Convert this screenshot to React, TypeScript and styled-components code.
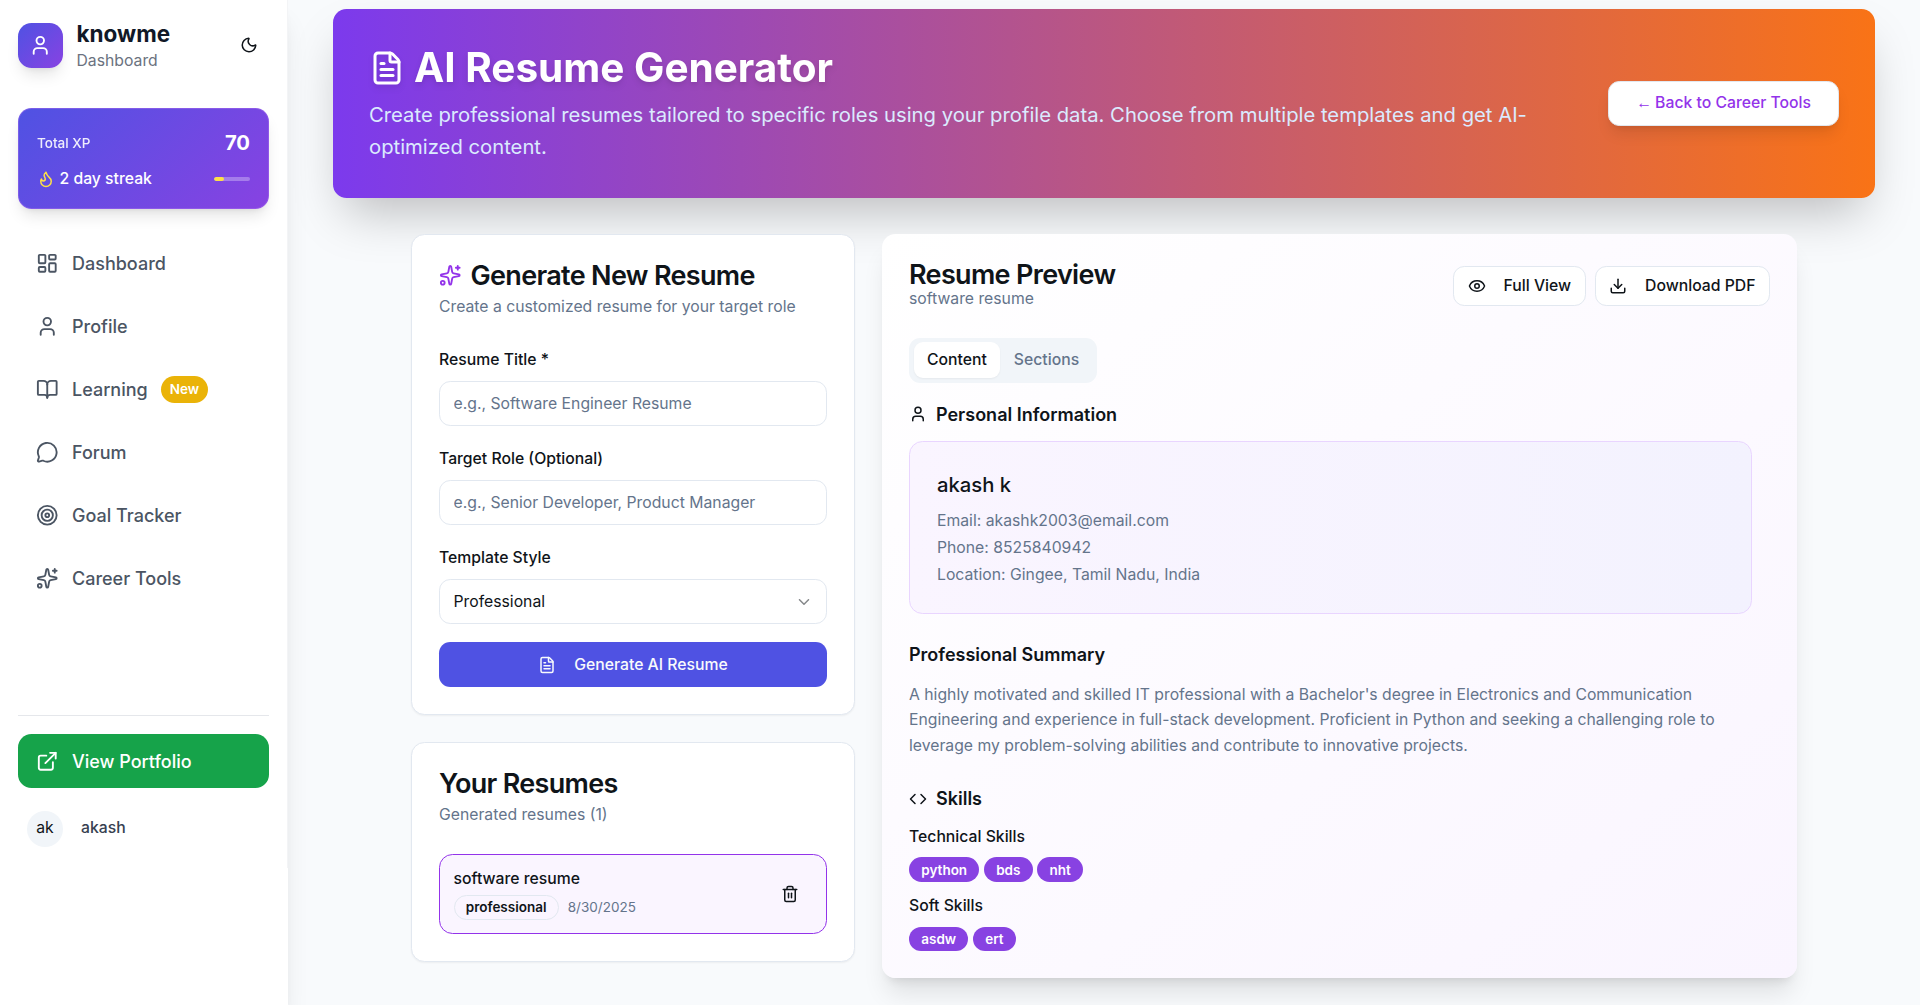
import React from "react";
import styled, { createGlobalStyle, css } from "styled-components";
import {
  BookOpen,
  ChevronDown,
  Code,
  Download,
  ExternalLink,
  Eye,
  FileText,
  Flame,
  LayoutDashboard,
  MessageCircle,
  Moon,
  Sparkles,
  Target,
  Trash2,
  User,
} from "lucide-react";

const color = {
  ink: "#0f1419",
  muted: "#64748b",
  border: "#e2e8f0",
  primary: "#4f52e3",
  accent: "#8842e2",
  purple: "#9333ea",
  lavender: "#faf5ff",
  page: "#f8fafc",
};

const GlobalStyle = createGlobalStyle`
  *, *::before, *::after { box-sizing: border-box; }
  html { font-size: 18px; }
  body {
    margin: 0;
    overflow: hidden;
    background: ${color.page};
    color: ${color.ink};
    font-family: Inter, "Liberation Sans", sans-serif;
    font-size: 1rem;
    line-height: 1.5;
  }
  h1, h2, h3, h4, p { margin: 0; }
  button, input { font: inherit; color: inherit; }
  svg { display: block; flex-shrink: 0; }
`;

const Shell = styled.div`
  display: flex;
  height: 1005px;
  overflow: hidden;
`;

/* Sidebar */

const Sidebar = styled.aside`
  position: relative;
  z-index: 2;
  width: 16rem;
  flex-shrink: 0;
  background: #fff;
  box-shadow: 0 20px 25px -5px rgba(0, 0, 0, 0.1), 0 8px 10px -6px rgba(0, 0, 0, 0.1);
`;

const SidebarInner = styled.div`
  display: flex;
  flex-direction: column;
  height: 868px;
  border-right: 1px solid #f3f4f6;
`;

const Brand = styled.div`
  display: flex;
  align-items: center;
  gap: 0.75rem;
  padding: 1rem;
`;

const BrandMark = styled.div`
  display: grid;
  place-items: center;
  width: 2.5rem;
  height: 2.5rem;
  border-radius: 0.75rem;
  color: #fff;
  background: linear-gradient(135deg, ${color.primary}, ${color.accent});
  box-shadow: 0 10px 15px -3px rgba(0, 0, 0, 0.1), 0 4px 6px -4px rgba(0, 0, 0, 0.1);
`;

const BrandText = styled.div`
  flex: 1;
`;

const BrandName = styled.div`
  font-size: 1.25rem;
  line-height: 1.75rem;
  font-weight: 700;
  color: #111827;
`;

const BrandSub = styled.div`
  font-size: 0.875rem;
  line-height: 1.25rem;
  color: #6b7280;
`;

const IconButton = styled.button`
  display: grid;
  place-items: center;
  width: 2.25rem;
  height: 2.25rem;
  padding: 0;
  border: 0;
  background: transparent;
`;

const XpCard = styled.div`
  display: flex;
  flex-direction: column;
  gap: 0.5rem;
  margin: 1rem 1rem 0;
  padding: 1rem;
  border: 1px solid rgba(168, 110, 240, 0.45);
  border-radius: 0.75rem;
  color: #fff;
  background: linear-gradient(135deg, ${color.primary}, ${color.accent}) border-box;
  box-shadow: 0 10px 15px -3px rgba(0, 0, 0, 0.1), 0 4px 6px -4px rgba(0, 0, 0, 0.1);
`;

const XpRow = styled.div`
  display: flex;
  align-items: center;
  justify-content: space-between;
`;

const XpLabel = styled.span`
  font-size: 0.75rem;
  line-height: 1rem;
  font-weight: 500;
  opacity: 0.9;
`;

const XpValue = styled.span`
  font-size: 1.125rem;
  line-height: 1.75rem;
  font-weight: 700;
`;

const Streak = styled.span`
  display: flex;
  align-items: center;
  gap: 0.25rem;
  font-size: 0.875rem;
  line-height: 1.25rem;
  font-weight: 500;
  svg { color: #fde047; }
`;

const Meter = styled.div`
  width: 2rem;
  height: 4px;
  overflow: hidden;
  border-radius: 999px;
  background: rgba(255, 255, 255, 0.3);
`;

const MeterFill = styled.div<{ $share: number }>`
  width: ${(p) => p.$share * 100}%;
  height: 100%;
  border-radius: 999px;
  background: #fde047;
`;

const Nav = styled.nav`
  display: flex;
  flex-direction: column;
  gap: 0.5rem;
  padding: 1.5rem 1rem 0;
`;

const navItem = css`
  display: flex;
  align-items: center;
  gap: 0.75rem;
  height: 54px;
  padding: 0.75rem 1rem;
  border-radius: 0.75rem;
  font-weight: 500;
`;

const NavItem = styled.div`
  ${navItem}
  color: #4b5563;
`;

const NewBadge = styled.span`
  padding: 0.25rem 8.5px;
  border-radius: 999px;
  background: #eab308;
  color: #fff;
  font-size: 0.75rem;
  line-height: 1rem;
  font-weight: 600;
`;

const SidebarFooter = styled.div`
  display: flex;
  flex-direction: column;
  gap: 1rem;
  margin: auto 1rem 17px;
  padding-top: 1rem;
  border-top: 1px solid #e5e7eb;
`;

const PortfolioButton = styled.div`
  ${navItem}
  background: #16a34a;
  color: #fff;
`;

const Account = styled.div`
  display: flex;
  align-items: center;
  gap: 1rem;
  height: 45px;
  padding: 0 0.5rem;
  font-size: 0.875rem;
  line-height: 1.25rem;
  font-weight: 500;
  color: #374151;
`;

const Avatar = styled.span`
  display: grid;
  place-items: center;
  width: 2rem;
  height: 2rem;
  border-radius: 50%;
  background: #f1f5f9;
  color: ${color.ink};
  font-weight: 400;
`;

/* Main column */

const Main = styled.main`
  flex: 1;
  padding: 9px 2.5rem 0;
`;

const Banner = styled.header`
  display: flex;
  align-items: center;
  justify-content: space-between;
  padding: 2rem;
  border-radius: 0.75rem;
  background: linear-gradient(to right, #7c3aed, #f97316);
  box-shadow: 0 25px 50px -12px rgba(0, 0, 0, 0.25);
`;

const BannerText = styled.div`
  width: 1190px;
`;

const BannerTitle = styled.h1`
  display: flex;
  align-items: center;
  gap: 0.5rem;
  margin-bottom: 0.5rem;
  color: #fff;
  font-size: 2.25rem;
  line-height: 2.5rem;
  font-weight: 700;
  filter: drop-shadow(0 4px 3px rgba(0, 0, 0, 0.07)) drop-shadow(0 2px 2px rgba(0, 0, 0, 0.06));
`;

const BannerCopy = styled.p`
  font-size: 1.125rem;
  line-height: 1.75rem;
  color: #dbeafe;
`;

const BackButton = styled.button`
  height: 2.5rem;
  padding: 0 1.5rem;
  border: 1px solid ${color.border};
  border-radius: 0.625rem;
  background: #fff;
  color: ${color.purple};
  font-size: 0.875rem;
  line-height: 1.25rem;
  font-weight: 500;
  white-space: nowrap;
  box-shadow: 0 10px 15px -3px rgba(0, 0, 0, 0.1), 0 4px 6px -4px rgba(0, 0, 0, 0.1);
`;

const Arrow = styled.span`
  margin-right: -1px;
  font-family: "Liberation Sans", sans-serif;
  font-weight: 400;
  line-height: 1;
`;

const Columns = styled.div`
  display: grid;
  grid-template-columns: 444px 915px;
  gap: 1.5rem;
  width: 1386px;
  margin: 2rem auto 0;
  align-items: start;
`;

const Stack = styled.div`
  display: flex;
  flex-direction: column;
  gap: 1.5rem;
`;

const Card = styled.section`
  padding: 1.5rem;
  border: 1px solid ${color.border};
  border-radius: 0.75rem;
  background: #fff;
  box-shadow: 0 1px 2px rgba(0, 0, 0, 0.05);
`;

const PreviewCard = styled(Card)`
  border: 0;
  background: linear-gradient(to bottom right, #fff, ${color.lavender});
  box-shadow: 0 20px 25px -5px rgba(0, 0, 0, 0.1), 0 8px 10px -6px rgba(0, 0, 0, 0.1);
`;

const CardHeader = styled.div`
  display: flex;
  flex-direction: column;
  gap: 0.375rem;
  margin-bottom: 1.5rem;
`;

const PreviewHeader = styled.div`
  display: flex;
  align-items: center;
  justify-content: space-between;
  margin-bottom: 1.5rem;
`;

const CardTitle = styled.h2`
  display: flex;
  align-items: center;
  gap: 0.5rem;
  font-size: 1.5rem;
  line-height: 1;
  font-weight: 600;
  letter-spacing: -0.025em;
  svg { color: ${color.purple}; }
`;

const Muted = styled.p`
  font-size: 0.875rem;
  line-height: 1.25rem;
  color: ${color.muted};
`;

const Form = styled.form`
  display: flex;
  flex-direction: column;
  gap: 1rem;
`;

const Field = styled.label`
  display: flex;
  flex-direction: column;
  gap: 0.5rem;
  font-size: 0.875rem;
  line-height: 1.5rem;
`;

const FieldName = styled.span`
  height: 1.5rem;
  padding-top: 1px;
  font-weight: 500;
`;

const TextInput = styled.input`
  width: 100%;
  height: 2.5rem;
  padding: 0 0.75rem;
  border: 1px solid ${color.border};
  border-radius: 0.625rem;
  background: #fff;
  font-size: 0.875rem;
  &::placeholder { color: ${color.muted}; opacity: 1; }
`;

const SelectBox = styled.div`
  display: flex;
  align-items: center;
  justify-content: space-between;
  height: 2.5rem;
  padding: 0 0.75rem;
  border: 1px solid ${color.border};
  border-radius: 0.625rem;
  svg { opacity: 0.5; }
`;

const SubmitButton = styled.button`
  display: flex;
  align-items: center;
  justify-content: center;
  gap: 1rem;
  height: 2.5rem;
  padding: 0;
  border: 0;
  border-radius: 0.625rem;
  background: ${color.primary};
  color: #f8fafc;
  font-size: 0.875rem;
  font-weight: 500;
`;

const ResumeItem = styled.div`
  display: flex;
  align-items: center;
  justify-content: space-between;
  padding: 0.75rem;
  border: 1px solid ${color.purple};
  border-radius: 0.75rem;
  background: ${color.lavender};
`;

const ResumeName = styled.div`
  margin-bottom: 0.25rem;
  font-size: 0.875rem;
  line-height: 1.25rem;
  font-weight: 500;
`;

const ResumeMeta = styled.div`
  display: flex;
  align-items: center;
  gap: 0.5rem;
  font-size: 0.75rem;
  line-height: 1rem;
  color: ${color.muted};
`;

const Badge = styled.span<{ $solid?: boolean }>`
  padding: 0.125rem 0.625rem;
  border: 1px solid ${(p) => (p.$solid ? "transparent" : color.border)};
  border-radius: 999px;
  background: ${(p) => (p.$solid ? color.accent : "transparent")};
  color: ${(p) => (p.$solid ? "#fff" : color.ink)};
  font-size: 0.75rem;
  line-height: 1rem;
  font-weight: 600;
`;

const DeleteButton = styled(IconButton)`
  width: 2.5rem;
`;

const Actions = styled.div`
  display: flex;
  gap: 0.5rem;
`;

const OutlineButton = styled.button`
  display: flex;
  align-items: center;
  gap: 1rem;
  height: 2.25rem;
  padding: 0 0.75rem;
  border: 1px solid ${color.border};
  border-radius: 0.625rem;
  background: #fff;
  font-size: 0.875rem;
  line-height: 1.25rem;
  font-weight: 500;
`;

const TabList = styled.div`
  display: inline-flex;
  align-items: center;
  height: 2.5rem;
  padding: 0.25rem;
  margin-bottom: 1rem;
  border-radius: 0.625rem;
  background: #f1f5f9;
  vertical-align: top;
`;

const Tab = styled.div<{ $active?: boolean }>`
  padding: 0.375rem 0.75rem;
  border-radius: 0.5rem;
  font-size: 0.875rem;
  line-height: 1.25rem;
  font-weight: 500;
  color: ${(p) => (p.$active ? color.ink : color.muted)};
  background: ${(p) => (p.$active ? "#fff" : "transparent")};
  box-shadow: ${(p) => (p.$active ? "0 1px 2px rgba(0, 0, 0, 0.05)" : "none")};
`;

const Sections = styled.div`
  display: flex;
  flex-direction: column;
  gap: 1.5rem;
  padding-right: 1rem;
`;

const SectionTitle = styled.h3`
  display: flex;
  align-items: center;
  gap: 0.5rem;
  margin-bottom: 0.75rem;
  font-size: 1rem;
  line-height: 1.5rem;
  font-weight: 600;
`;

const InfoPanel = styled.div`
  display: flex;
  flex-direction: column;
  gap: 0.25rem;
  padding: 1.5rem;
  border: 1px solid #e9d5ff;
  border-radius: 0.75rem;
  background: linear-gradient(to right, ${color.lavender}, #f3f2fe);
`;

const PersonName = styled.h4`
  margin-bottom: 0.25rem;
  font-size: 1.125rem;
  line-height: 1.75rem;
  font-weight: 500;
`;

const Summary = styled(Muted)`
  line-height: 1.625;
`;

const SkillGroups = styled.div`
  display: flex;
  flex-direction: column;
  gap: 0.75rem;
`;

const SkillLabel = styled.div`
  margin-bottom: 0.5rem;
  font-size: 0.875rem;
  line-height: 1.25rem;
  font-weight: 500;
`;

const Badges = styled.div`
  display: flex;
  gap: 0.25rem;
`;

const links = [
  { label: "Dashboard", Icon: LayoutDashboard },
  { label: "Profile", Icon: User },
  { label: "Learning", Icon: BookOpen, isNew: true },
  { label: "Forum", Icon: MessageCircle },
  { label: "Goal Tracker", Icon: Target },
  { label: "Career Tools", Icon: Sparkles },
];

const skills = [
  { label: "Technical Skills", items: ["python", "bds", "nht"] },
  { label: "Soft Skills", items: ["asdw", "ert"] },
];

export default function App() {
  return (
    <>
      <GlobalStyle />
      <Shell>
        <Sidebar>
          <SidebarInner>
            <Brand>
              <BrandMark>
                <User size={22.5} />
              </BrandMark>
              <BrandText>
                <BrandName>knowme</BrandName>
                <BrandSub>Dashboard</BrandSub>
              </BrandText>
              <IconButton type="button" aria-label="Toggle theme">
                <Moon size={18} />
              </IconButton>
            </Brand>
            <XpCard>
              <XpRow>
                <XpLabel>Total XP</XpLabel>
                <XpValue>70</XpValue>
              </XpRow>
              <XpRow>
                <Streak>
                  <Flame size={18} />
                  2 day streak
                </Streak>
                <Meter>
                  <MeterFill $share={2 / 7} />
                </Meter>
              </XpRow>
            </XpCard>
            <Nav>
              {links.map(({ label, Icon, isNew }) => (
                <NavItem key={label}>
                  <Icon size={22.5} />
                  <span>{label}</span>
                  {isNew && <NewBadge>New</NewBadge>}
                </NavItem>
              ))}
            </Nav>
            <SidebarFooter>
              <PortfolioButton>
                <ExternalLink size={22.5} />
                View Portfolio
              </PortfolioButton>
              <Account>
                <Avatar>ak</Avatar>
                akash
              </Account>
            </SidebarFooter>
          </SidebarInner>
        </Sidebar>

        <Main>
          <Banner>
            <BannerText>
              <BannerTitle>
                <FileText size={36} />
                AI Resume Generator
              </BannerTitle>
              <BannerCopy>
                Create professional resumes tailored to specific roles using your profile data. Choose
                from multiple templates and get AI-optimized content.
              </BannerCopy>
            </BannerText>
            <BackButton type="button">
              <Arrow>←</Arrow> Back to Career Tools
            </BackButton>
          </Banner>

          <Columns>
            <Stack>
              <Card>
                <CardHeader>
                  <CardTitle>
                    <Sparkles size={22.5} />
                    Generate New Resume
                  </CardTitle>
                  <Muted>Create a customized resume for your target role</Muted>
                </CardHeader>
                <Form>
                  <Field>
                    <FieldName>Resume Title *</FieldName>
                    <TextInput placeholder="e.g., Software Engineer Resume" />
                  </Field>
                  <Field>
                    <FieldName>Target Role (Optional)</FieldName>
                    <TextInput placeholder="e.g., Senior Developer, Product Manager" />
                  </Field>
                  <Field as="div">
                    <FieldName>Template Style</FieldName>
                    <SelectBox>
                      Professional
                      <ChevronDown size={18} />
                    </SelectBox>
                  </Field>
                  <SubmitButton type="button">
                    <FileText size={18} />
                    Generate AI Resume
                  </SubmitButton>
                </Form>
              </Card>

              <Card>
                <CardHeader>
                  <CardTitle>Your Resumes</CardTitle>
                  <Muted>Generated resumes (1)</Muted>
                </CardHeader>
                <ResumeItem>
                  <div>
                    <ResumeName>software resume</ResumeName>
                    <ResumeMeta>
                      <Badge>professional</Badge>
                      8/30/2025
                    </ResumeMeta>
                  </div>
                  <DeleteButton type="button" aria-label="Delete resume">
                    <Trash2 size={18} />
                  </DeleteButton>
                </ResumeItem>
              </Card>
            </Stack>

            <PreviewCard>
              <PreviewHeader>
                <div>
                  <CardTitle>Resume Preview</CardTitle>
                  <Muted>software resume</Muted>
                </div>
                <Actions>
                  <OutlineButton type="button">
                    <Eye size={18} />
                    Full View
                  </OutlineButton>
                  <OutlineButton type="button">
                    <Download size={18} />
                    Download PDF
                  </OutlineButton>
                </Actions>
              </PreviewHeader>
              <TabList>
                <Tab $active>Content</Tab>
                <Tab>Sections</Tab>
              </TabList>
              <Sections>
                <section>
                  <SectionTitle>
                    <User size={18} />
                    Personal Information
                  </SectionTitle>
                  <InfoPanel>
                    <PersonName>akash k</PersonName>
                    <Muted>Email: akashk2003@email.com</Muted>
                    <Muted>Phone: 8525840942</Muted>
                    <Muted>Location: Gingee, Tamil Nadu, India</Muted>
                  </InfoPanel>
                </section>
                <section>
                  <SectionTitle>Professional Summary</SectionTitle>
                  <Summary>
                    A highly motivated and skilled IT professional with a Bachelor's degree in
                    Electronics and Communication Engineering and experience in full-stack
                    development. Proficient in Python and seeking a challenging role to leverage my
                    problem-solving abilities and contribute to innovative projects.
                  </Summary>
                </section>
                <section>
                  <SectionTitle>
                    <Code size={18} />
                    Skills
                  </SectionTitle>
                  <SkillGroups>
                    {skills.map((group) => (
                      <div key={group.label}>
                        <SkillLabel>{group.label}</SkillLabel>
                        <Badges>
                          {group.items.map((item) => (
                            <Badge key={item} $solid>
                              {item}
                            </Badge>
                          ))}
                        </Badges>
                      </div>
                    ))}
                  </SkillGroups>
                </section>
              </Sections>
            </PreviewCard>
          </Columns>
        </Main>
      </Shell>
    </>
  );
}
